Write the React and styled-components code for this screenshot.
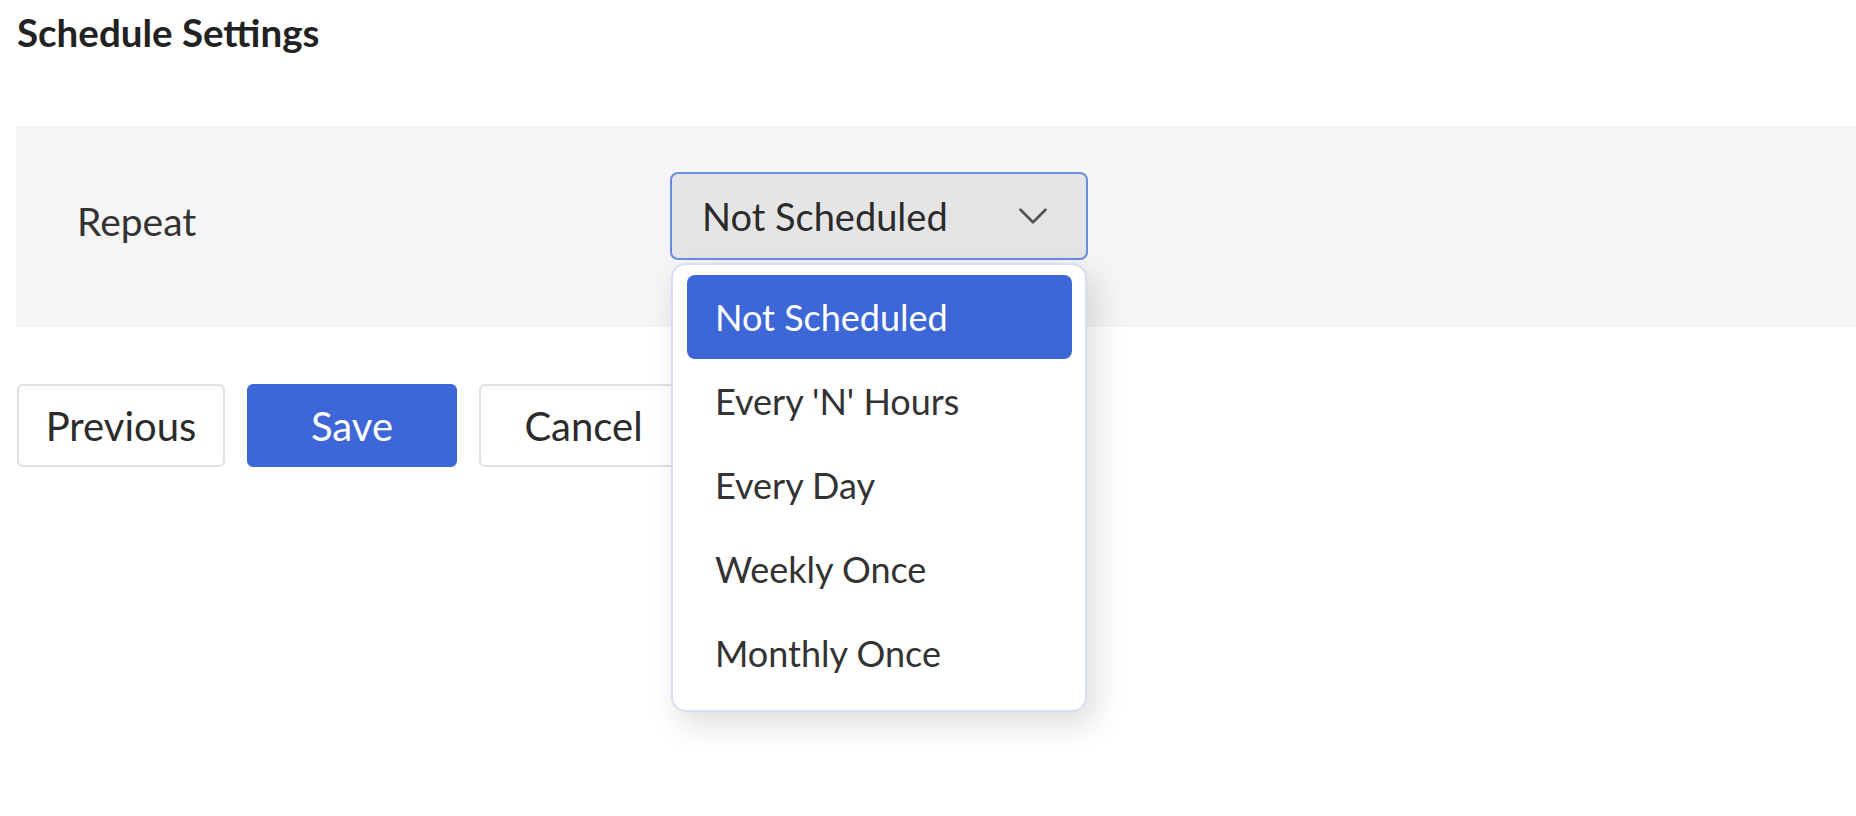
import React, { useState } from 'react';
import styled, { createGlobalStyle } from 'styled-components';
import { ChevronDown } from 'lucide-react';

const GlobalStyle = createGlobalStyle`
  html, body {
    margin: 0;
    padding: 0;
    background: #ffffff;
  }

  body {
    font-family: Lato, "Open Sans", "Liberation Sans", sans-serif;
    color: #2b2b2b;
  }
`;

const Page = styled.div`
  box-sizing: border-box;
  min-height: 100vh;
  padding: 10px 0 0 16px;
`;

const Title = styled.h1`
  margin: 0 0 72px 1px;
  font-size: 38.5px;
  line-height: 1.15;
  font-weight: 700;
  color: #222;
`;

const Panel = styled.section`
  display: flex;
  align-items: flex-start;
  background: #f5f5f5;
  padding: 46px 0 67px 61px;
`;

const Label = styled.label`
  width: 593px;
  padding-top: 26px;
  font-size: 39px;
  line-height: 1.2;
  color: #333;
`;

const SelectWrap = styled.div`
  position: relative;
`;

const SelectBox = styled.button`
  display: flex;
  align-items: center;
  justify-content: space-between;
  box-sizing: border-box;
  width: 418px;
  height: 88px;
  padding: 0 28px 0 30px;
  background: #e5e5e5;
  border: 2px solid #6a8ce3;
  border-radius: 8px;
  font-family: inherit;
  font-size: 38px;
  color: #2b2b2b;
  cursor: pointer;

  svg {
    color: #555;
  }
`;

const Menu = styled.ul`
  position: absolute;
  top: calc(100% + 3px);
  left: 1px;
  box-sizing: border-box;
  width: 416px;
  margin: 0;
  padding: 10px 13px 15px 14px;
  list-style: none;
  background: #fff;
  border: 2px solid #d6def4;
  border-radius: 15px;
  box-shadow: 8px 12px 32px rgba(0, 0, 0, 0.14);
  z-index: 5;
`;

const MenuItem = styled.li`
  height: 84px;
  padding-left: 28px;
  display: flex;
  align-items: center;
  border-radius: 8px;
  font-size: 36px;
  color: ${props => props.active ? '#fff' : '#333'};
  background: ${props => props.active ? '#3d67d7' : 'transparent'};
  cursor: pointer;
`;

const Actions = styled.div`
  display: flex;
  gap: 22px;
  margin-top: 57px;
  padding-left: 1px;
`;

const Button = styled.button`
  box-sizing: border-box;
  width: ${props => props.w || 209}px;
  height: 83px;
  padding: 0;
  border-radius: 6px;
  font-family: inherit;
  font-size: 40px;
  cursor: pointer;
  color: ${props => props.primary ? '#fff' : '#2b2b2b'};
  background: ${props => props.primary ? '#3d67d7' : '#fff'};
  border: 2px solid ${props => props.primary ? '#3d67d7' : '#e2e2e2'};
`;

const options = [
  'Not Scheduled',
  "Every 'N' Hours",
  'Every Day',
  'Weekly Once',
  'Monthly Once',
];

export default function App() {
  const [value, setValue] = useState('Not Scheduled');

  return (
    <Page>
      <GlobalStyle />
      <Title>Schedule Settings</Title>
      <Panel>
        <Label>Repeat</Label>
        <SelectWrap>
          <SelectBox>
            <span>{value}</span>
            <ChevronDown size={50} strokeWidth={1.3} />
          </SelectBox>
          <Menu>
            {options.map(opt => (
              <MenuItem key={opt} active={opt === value} onClick={() => setValue(opt)}>
                {opt}
              </MenuItem>
            ))}
          </Menu>
        </SelectWrap>
      </Panel>
      <Actions>
        <Button w={208}>Previous</Button>
        <Button primary w={210}>Save</Button>
        <Button w={209}>Cancel</Button>
      </Actions>
    </Page>
  );
}
